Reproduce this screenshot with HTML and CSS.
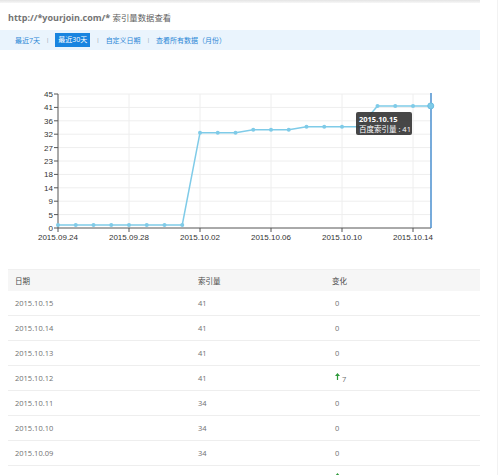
FILE: index.html
```html
<!DOCTYPE html>
<html lang="zh-CN">

<head>
  <meta charset="UTF-8">
  <title>索引量数据查看</title>
  <link rel="stylesheet" href="styles.css">
</head>

<body>
  <div class="page">
    <div class="top-edge"></div>

    <div class="title"><b>http://*yourjoin.com/*</b> <span>索引量数据查看</span></div>

    <div class="nav">
      <a href="javascript:;">最近7天</a>
      <span class="sep">|</span>
      <a href="javascript:;" class="active">最近30天</a>
      <span class="sep">|</span>
      <a href="javascript:;">自定义日期</a>
      <span class="sep">|</span>
      <a href="javascript:;">查看所有数据（月份）</a>
    </div>

    <!-- 索引量走势图 -->
    <svg class="chart" width="480" height="200" viewBox="0 0 480 200">
      <g class="grid">
        <line x1="58" y1="34" x2="431" y2="34" />
        <line x1="58" y1="47.4" x2="431" y2="47.4" />
        <line x1="58" y1="60.8" x2="431" y2="60.8" />
        <line x1="58" y1="74.2" x2="431" y2="74.2" />
        <line x1="58" y1="87.6" x2="431" y2="87.6" />
        <line x1="58" y1="101" x2="431" y2="101" />
        <line x1="58" y1="114.4" x2="431" y2="114.4" />
        <line x1="58" y1="127.8" x2="431" y2="127.8" />
        <line x1="58" y1="141.2" x2="431" y2="141.2" />
        <line x1="58" y1="154.6" x2="431" y2="154.6" />
        <line x1="129" y1="34" x2="129" y2="168" />
        <line x1="200" y1="34" x2="200" y2="168" />
        <line x1="271" y1="34" x2="271" y2="168" />
        <line x1="342" y1="34" x2="342" y2="168" />
        <line x1="413" y1="34" x2="413" y2="168" />
      </g>

      <g class="axis">
        <line x1="58" y1="34" x2="58" y2="168" />
        <line x1="58" y1="168" x2="431" y2="168" />
        <line x1="54" y1="34" x2="58" y2="34" />
        <line x1="54" y1="47.4" x2="58" y2="47.4" />
        <line x1="54" y1="60.8" x2="58" y2="60.8" />
        <line x1="54" y1="74.2" x2="58" y2="74.2" />
        <line x1="54" y1="87.6" x2="58" y2="87.6" />
        <line x1="54" y1="101" x2="58" y2="101" />
        <line x1="54" y1="114.4" x2="58" y2="114.4" />
        <line x1="54" y1="127.8" x2="58" y2="127.8" />
        <line x1="54" y1="141.2" x2="58" y2="141.2" />
        <line x1="54" y1="154.6" x2="58" y2="154.6" />
        <line x1="54" y1="168" x2="58" y2="168" />
        <line x1="58" y1="168" x2="58" y2="172" />
        <line x1="129" y1="168" x2="129" y2="172" />
        <line x1="200" y1="168" x2="200" y2="172" />
        <line x1="271" y1="168" x2="271" y2="172" />
        <line x1="342" y1="168" x2="342" y2="172" />
        <line x1="413" y1="168" x2="413" y2="172" />
      </g>

      <g class="y-labels">
        <text x="53" y="37">45</text>
        <text x="53" y="50.4">41</text>
        <text x="53" y="63.8">36</text>
        <text x="53" y="77.2">32</text>
        <text x="53" y="90.6">27</text>
        <text x="53" y="104">23</text>
        <text x="53" y="117.4">18</text>
        <text x="53" y="130.8">14</text>
        <text x="53" y="144.2">9</text>
        <text x="53" y="157.6">5</text>
        <text x="53" y="171">0</text>
      </g>

      <g class="x-labels">
        <text x="58" y="180">2015.09.24</text>
        <text x="129" y="180">2015.09.28</text>
        <text x="200" y="180">2015.10.02</text>
        <text x="271" y="180">2015.10.06</text>
        <text x="342" y="180">2015.10.10</text>
        <text x="413" y="180">2015.10.14</text>
      </g>

      <polyline class="line" points="58,165 75.75,165 93.5,165 111.25,165 129,165 146.75,165 164.5,165 182.25,165 200,72.7 217.75,72.7 235.5,72.7 253.25,69.7 271,69.7 288.75,69.7 306.5,66.7 324.25,66.7 342,66.7 359.75,66.7 377.5,45.9 395.25,45.9 413,45.9 430.75,45.9" />

      <g class="dots">
        <circle cx="58" cy="165" r="2" />
        <circle cx="75.75" cy="165" r="2" />
        <circle cx="93.5" cy="165" r="2" />
        <circle cx="111.25" cy="165" r="2" />
        <circle cx="129" cy="165" r="2" />
        <circle cx="146.75" cy="165" r="2" />
        <circle cx="164.5" cy="165" r="2" />
        <circle cx="182.25" cy="165" r="2" />
        <circle cx="200" cy="72.7" r="2" />
        <circle cx="217.75" cy="72.7" r="2" />
        <circle cx="235.5" cy="72.7" r="2" />
        <circle cx="253.25" cy="69.7" r="2" />
        <circle cx="271" cy="69.7" r="2" />
        <circle cx="288.75" cy="69.7" r="2" />
        <circle cx="306.5" cy="66.7" r="2" />
        <circle cx="324.25" cy="66.7" r="2" />
        <circle cx="342" cy="66.7" r="2" />
        <circle cx="359.75" cy="66.7" r="2" />
        <circle cx="377.5" cy="45.9" r="2" />
        <circle cx="395.25" cy="45.9" r="2" />
        <circle cx="413" cy="45.9" r="2" />
      </g>

      <!-- 鼠标悬停的竖线和提示框 -->
      <line class="hover-line" x1="431" y1="33" x2="431" y2="168" />
      <circle class="hover-dot" cx="430.75" cy="45.9" r="3" />
      <rect class="tip-bg" x="356" y="52" width="56" height="23" rx="2" />
      <text class="tip-date" x="359" y="62">2015.10.15</text>
      <text class="tip-text" x="359" y="72">百度索引量 : 41</text>
    </svg>

    <table class="data">
      <thead>
        <tr>
          <th class="col-date">日期</th>
          <th class="col-num">索引量</th>
          <th>变化</th>
        </tr>
      </thead>
      <tbody>
        <tr><td>2015.10.15</td><td>41</td><td><span class="chg">0</span></td></tr>
        <tr><td>2015.10.14</td><td>41</td><td><span class="chg">0</span></td></tr>
        <tr><td>2015.10.13</td><td>41</td><td><span class="chg">0</span></td></tr>
        <tr><td>2015.10.12</td><td>41</td><td><span class="chg"><svg class="up" width="5" height="7" viewBox="0 0 5 7"><path d="M2.5 0 L5 3 L3.1 3 L3.1 7 L1.9 7 L1.9 3 L0 3 Z" /></svg> 7</span></td></tr>
        <tr><td>2015.10.11</td><td>34</td><td><span class="chg">0</span></td></tr>
        <tr><td>2015.10.10</td><td>34</td><td><span class="chg">0</span></td></tr>
        <tr><td>2015.10.09</td><td>34</td><td><span class="chg">0</span></td></tr>
        <tr><td>2015.10.08</td><td>34</td><td><span class="chg"><svg class="up" width="5" height="7" viewBox="0 0 5 7"><path d="M2.5 0 L5 3 L3.1 3 L3.1 7 L1.9 7 L1.9 3 L0 3 Z" /></svg> 1</span></td></tr>
      </tbody>
    </table>
  </div>
</body>

</html>
```

FILE: styles.css
```css
* {
  padding: 0;
  margin: 0;
}

body {
  background: #fff;
  font-family: "Open Sans", "Noto Sans CJK SC", sans-serif;
  color: #666;
}

.page {
  width: 497px;
  min-height: 100vh;
  border-right: 1px solid #f2f2f2;
  overflow: hidden;
}

.top-edge {
  width: 480px;
  height: 3px;
  background: linear-gradient(#e4e4e4, #f7f7f7);
}

.title {
  margin: 8px 0 0 8px;
  line-height: 14px;
  font-size: 9px;
  color: #747474;
}

.title span {
  font-size: 8.4px;
  color: #5e5e5e;
}

/* 日期切换 */
.nav {
  display: flex;
  align-items: center;
  gap: 6px;
  width: 465px;
  height: 20px;
  margin-top: 5px;
  padding-left: 15px;
  background: #eaf4fd;
  font-size: 7px;
}

.nav a {
  text-decoration: none;
  color: #2b87d6;
}

.nav a.active {
  padding: 0 3px;
  line-height: 14px;
  background: #1884e0;
  color: #fff;
}

.nav .sep {
  color: #8a9aaa;
  font-size: 6px;
}

.chart {
  display: block;
  margin-top: 10px;
}

.grid line {
  stroke: #eeeeee;
  stroke-width: 1;
}

.axis line {
  stroke: #555;
  stroke-width: 1;
}

.y-labels text,
.x-labels text {
  font-family: "Liberation Sans", sans-serif;
  font-size: 8px;
  fill: #333;
}

.y-labels text {
  text-anchor: end;
}

.x-labels text {
  text-anchor: middle;
}

.line {
  fill: none;
  stroke: #7fcbe8;
  stroke-width: 1.5;
}

.dots circle {
  fill: #7fcbe8;
}

.hover-line {
  stroke: #4a8fcf;
  stroke-width: 1.5;
}

.hover-dot {
  fill: #7fcbe8;
  stroke: #6bbde0;
}

.tip-bg {
  fill: #333;
  opacity: .9;
}

.tip-date,
.tip-text {
  font-size: 7.5px;
  fill: #fff;
}

.tip-date {
  font-weight: bold;
}

/* 数据表格 */
.data {
  width: 472px;
  margin: 9px 0 0 8px;
  border-collapse: collapse;
  font-size: 7.5px;
}

.data th {
  height: 21px;
  padding: 0 7px;
  text-align: left;
  font-weight: normal;
  color: #4a4a4a;
  background: #f6f6f6;
  border-top: 1px solid #f0f0f0;
}

.data .col-date {
  width: 169px;
}

.data .col-num {
  width: 120px;
}

.data td {
  height: 24px;
  padding: 0 7px;
  color: #707070;
  border-bottom: 1px solid #eeeeee;
}

.chg {
  padding-left: 3px;
}

.up {
  fill: #2e9a3a;
  vertical-align: 2px;
}
```
